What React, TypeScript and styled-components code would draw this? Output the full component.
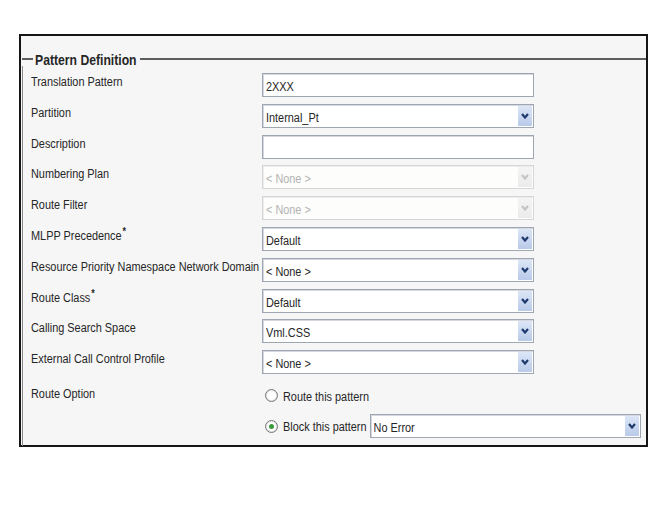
import React from "react";
import styled, { createGlobalStyle } from "styled-components";

const GlobalStyle = createGlobalStyle`
  body {
    margin: 0;
    background: #ffffff;
    font-family: "Liberation Sans", Arial, sans-serif;
    color: #262626;
  }
`;

const Page = styled.div`
  padding: 34px 0 0 19px;
`;

const Frame = styled.div`
  width: 629px;
  height: 413px;
  box-sizing: border-box;
  border: 2px solid #151515;
  background: #f6f6f6;
  padding-top: 16px;
`;

const Section = styled.div`
  margin-left: 1px;
`;

const LegendRow = styled.div`
  display: flex;
  align-items: center;
  height: 14px;
`;

const Rule = styled.div<{ $w?: number }>`
  height: 2px;
  background: #5e5e5e;
  width: ${(p) => (p.$w ? `${p.$w}px` : "auto")};
  flex: ${(p) => (p.$w ? "none" : "1")};
`;

const Text = styled.span<{ $bold?: boolean; $muted?: boolean }>`
  display: inline-block;
  font-size: ${(p) => (p.$bold ? "12.2px" : "10.9px")};
  font-weight: ${(p) => (p.$bold ? 700 : 400)};
  color: ${(p) => (p.$muted ? "#b3b3b3" : "#262626")};
  line-height: 14px;
  white-space: nowrap;
  transform: scaleY(1.24);
`;

const Title = styled.div`
  padding: 0 3px 0 2px;
`;

const Body = styled.div`
  border-left: 1px solid #8a8a8a;
  padding: 4px 0 0 8px;
  height: 380px;
  box-sizing: border-box;
`;

const Row = styled.div<{ $h?: number }>`
  display: grid;
  grid-template-columns: 231px 1fr;
  height: ${(p) => p.$h ?? 30.8}px;
  align-items: center;
`;

const Label = styled.div<{ $top?: number }>`
  align-self: start;
  padding-top: ${(p) => p.$top ?? 1}px;
`;

const Star = styled.sup`
  font-size: 9px;
  font-weight: 700;
  vertical-align: 4px;
  margin-left: 1px;
`;

const Control = styled.div`
  padding-top: 3px;
  align-self: start;
`;

const Field = styled.div<{ $w?: number; $disabled?: boolean }>`
  display: flex;
  align-items: center;
  box-sizing: border-box;
  width: ${(p) => p.$w ?? 272}px;
  height: 24px;
  padding: 1px 1px 1px 3px;
  background: ${(p) => (p.$disabled ? "#fdfdfb" : "#ffffff")};
  border: 1px solid ${(p) => (p.$disabled ? "#d6d6d6" : "#9ea6b2")};
  box-shadow: inset 1px 1px 0 ${(p) => (p.$disabled ? "#ececec" : "#d5d9df")};
`;

const FieldText = styled.div`
  flex: 1;
  overflow: hidden;
`;

const ArrowBox = styled.div<{ $disabled?: boolean }>`
  width: 14px;
  height: 20px;
  display: flex;
  align-items: center;
  justify-content: center;
  background: ${(p) =>
    p.$disabled
      ? "linear-gradient(#f4f4f4, #ebebeb)"
      : "linear-gradient(#dce6f6, #b8cae9)"};
  color: ${(p) => (p.$disabled ? "#c4c4c4" : "#1f3a6e")};
`;

const RadioGroup = styled.div`
  align-self: start;
  display: flex;
  flex-direction: column;
  gap: 5px;
  padding-top: 5px;
`;

const RadioLine = styled.div<{ $h: number }>`
  display: flex;
  align-items: center;
  height: ${(p) => p.$h}px;
  padding-left: 3px;
`;

const Radio = styled.span<{ $on?: boolean }>`
  width: 13px;
  height: 13px;
  box-sizing: border-box;
  border-radius: 50%;
  border: 1px solid #777777;
  background: #ffffff;
  box-shadow: inset 0 0 0 1px #e2e2e2;
  display: flex;
  align-items: center;
  justify-content: center;
  margin-right: 5px;
  &::after {
    content: "";
    display: ${(p) => (p.$on ? "block" : "none")};
    width: 5px;
    height: 5px;
    border-radius: 50%;
    background: #3c9a3c;
  }
`;

const Gap = styled.span`
  width: 3px;
`;

const Chevron = () => (
  <svg width="8" height="6" viewBox="0 0 8 6">
    <path d="M1 1 L4 4.5 L7 1" fill="none" stroke="currentColor" strokeWidth="2.2" />
  </svg>
);

const Select = ({ value, disabled, w }: { value: string; disabled?: boolean; w?: number }) => (
  <Field $disabled={disabled} $w={w}>
    <FieldText>
      <Text $muted={disabled}>{value}</Text>
    </FieldText>
    <ArrowBox $disabled={disabled}>
      <Chevron />
    </ArrowBox>
  </Field>
);

const Input = ({ value }: { value: string }) => (
  <Field>
    <FieldText>
      <Text>{value}</Text>
    </FieldText>
  </Field>
);

const rows: { label: string; star?: boolean; kind: "input" | "select"; value: string; disabled?: boolean }[] = [
  { label: "Translation Pattern", kind: "input", value: "2XXX" },
  { label: "Partition", kind: "select", value: "Internal_Pt" },
  { label: "Description", kind: "input", value: "" },
  { label: "Numbering Plan", kind: "select", value: "< None >", disabled: true },
  { label: "Route Filter", kind: "select", value: "< None >", disabled: true },
  { label: "MLPP Precedence", star: true, kind: "select", value: "Default" },
  { label: "Resource Priority Namespace Network Domain", kind: "select", value: "< None >" },
  { label: "Route Class", star: true, kind: "select", value: "Default" },
  { label: "Calling Search Space", kind: "select", value: "Vml.CSS" },
  { label: "External Call Control Profile", kind: "select", value: "< None >" },
];

export default function App() {
  return (
    <>
      <GlobalStyle />
      <Page>
        <Frame>
          <Section>
            <LegendRow>
              <Rule $w={11} />
              <Title>
                <Text $bold>Pattern Definition</Text>
              </Title>
              <Rule />
            </LegendRow>
            <Body>
              {rows.map((r) => (
                <Row key={r.label}>
                  <Label>
                    <Text>
                      {r.label}
                      {r.star && <Star>*</Star>}
                    </Text>
                  </Label>
                  <Control>
                    {r.kind === "input" ? (
                      <Input value={r.value} />
                    ) : (
                      <Select value={r.value} disabled={r.disabled} />
                    )}
                  </Control>
                </Row>
              ))}
              <Row $h={66}>
                <Label $top={5}>
                  <Text>Route Option</Text>
                </Label>
                <RadioGroup>
                  <RadioLine $h={26}>
                    <Radio />
                    <Text>Route this pattern</Text>
                  </RadioLine>
                  <RadioLine $h={25}>
                    <Radio $on />
                    <Text>Block this pattern</Text>
                    <Gap />
                    <Select value="No Error" w={271} />
                  </RadioLine>
                </RadioGroup>
              </Row>
            </Body>
          </Section>
        </Frame>
      </Page>
    </>
  );
}
